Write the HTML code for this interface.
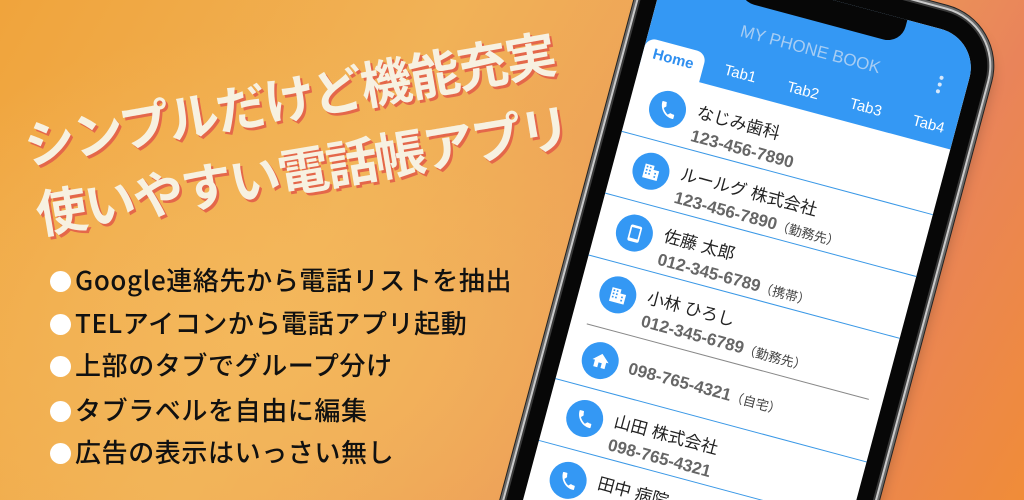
<!DOCTYPE html>
<html><head><meta charset="utf-8"><style>
*{margin:0;padding:0;box-sizing:border-box}
html{width:1024px;height:500px;overflow:hidden}
body{width:1024px;height:500px;overflow:hidden;position:relative;font-family:"Liberation Sans","Noto Sans CJK JP",sans-serif;
background:radial-gradient(ellipse 420px 300px at 260px 330px,rgba(244,184,92,0.9),rgba(244,184,92,0) 100%),linear-gradient(120deg,#f0a43c 0%,#f1b257 35%,#ec9a58 65%,#e9845a 80%,#f08c38 100%);}
#clip{position:absolute;left:0;top:0;width:1024px;height:500px;overflow:hidden}
.hl{position:absolute;color:#f7f1e1;font-weight:bold;font-size:51px;white-space:nowrap;text-shadow:2px 3px 0 #e4674a;transform-origin:0 50%;font-family:"Noto Sans CJK JP",sans-serif;letter-spacing:-2px}
.bl{position:absolute;left:50px;font-size:26px;letter-spacing:0.6px;color:#111;white-space:nowrap;font-family:"Noto Sans CJK JP",sans-serif;line-height:30px;font-weight:500}
.bl b{display:inline-block;width:21px;height:21px;border-radius:50%;background:#fff;vertical-align:-2px;margin-right:4px}
.phone{position:absolute;left:661px;top:-15px;width:0;height:0;transform:rotate(15deg);transform-origin:0 0}
.frame{position:absolute;left:-16px;top:-48px;width:354px;height:760px;border-radius:56px;background:#070707;box-shadow:0 0 0 2px #3a3a3a,0 0 0 4px #c9c9c9,0 0 0 6px #6a6a6a,0 0 0 7px #222,6px 8px 14px rgba(0,0,0,.25)}
.screen{position:absolute;left:0;top:-30px;width:322px;height:740px;border-radius:40px 40px 0 0;background:#fff;overflow:hidden}
.hdr{position:absolute;left:0;top:0;width:322px;height:114px;background:#3498f4}
.notch{position:absolute;left:77px;top:-20px;width:170px;height:45px;background:#070707;border-radius:0 0 18px 18px}
.title{position:absolute;left:0;width:322px;top:44px;text-align:center;color:#a7cdf3;font-size:17px}
.tab{position:absolute;top:87px;width:65px;text-align:center;color:#fff;font-size:15px}
.home{position:absolute;left:0;top:84px;width:62px;height:34px;background:#fff;border-radius:10px 10px 0 0;color:#2f8ff0;font-weight:bold;font-size:15px;text-align:center;line-height:30px}
.dots{position:absolute;left:293px;top:45px;width:4px}
.dots i{display:block;width:4px;height:4px;border-radius:50%;background:#d6e8fb;margin-bottom:3px}
.row{position:absolute;left:0;width:322px}
.ic{position:absolute;left:20px;width:37px;height:37px;border-radius:50%;background:#3498f4;display:flex;align-items:center;justify-content:center}
.nm{position:absolute;left:68px;font-size:17px;color:#222;white-space:nowrap;line-height:20px}
.nu{position:absolute;left:68px;font-size:17px;color:#666;font-weight:bold;white-space:nowrap;line-height:20px}
.nu small{font-size:13px;font-weight:normal;color:#444}
.sep{position:absolute;left:0;width:322px;height:1px;background:#3a98e6}
</style></head><body>
<div id="clip">
<div class="hl" style="left:24px;top:106px;transform:rotate(-10deg)">シンプルだけど機能充実</div>
<div class="hl" style="left:36px;top:175px;transform:rotate(-9.5deg)">使いやすい電話帳アプリ</div>

<div class="bl" style="top:265px"><b></b>Google連絡先から電話リストを抽出</div>
<div class="bl" style="top:308px"><b></b>TELアイコンから電話アプリ起動</div>
<div class="bl" style="top:350px"><b></b>上部のタブでグループ分け</div>
<div class="bl" style="top:395px"><b></b>タブラベルを自由に編集</div>
<div class="bl" style="top:437px"><b></b>広告の表示はいっさい無し</div>

<div class="phone">
 <div class="frame"></div>
 <div class="screen">
  <div class="hdr"></div>
  <div class="notch"></div>
  <div class="title">MY PHONE BOOK</div>
  <div class="home">Home</div>
  <div class="tab" style="left:67px">Tab1</div>
  <div class="tab" style="left:132px">Tab2</div>
  <div class="tab" style="left:197px">Tab3</div>
  <div class="tab" style="left:262px">Tab4</div>
  <div class="dots"><i></i><i></i><i></i></div>
 </div>
 <div class="row" style="top:0">
  <div class="ic" style="top:100px"><svg width="20" height="20" viewBox="0 0 24 24"><path fill="#fff" d="M6.6 10.8c1.4 2.8 3.8 5.1 6.6 6.6l2.2-2.2c.3-.3.7-.4 1-.2 1.1.4 2.3.6 3.6.6.6 0 1 .4 1 1V20c0 .6-.4 1-1 1C10.6 21 3 13.4 3 4c0-.6.4-1 1-1h3.5c.6 0 1 .4 1 1 0 1.3.2 2.5.6 3.6.1.3 0 .7-.2 1z"/></svg></div>
  <div class="nm" style="top:104px">なじみ歯科</div>
  <div class="nu" style="top:128px">123-456-7890</div>
 </div>
 <div class="sep" style="top:151px"></div>
 <div class="row">
  <div class="ic" style="top:164px"><svg width="20" height="20" viewBox="0 0 24 24"><path fill="#fff" d="M3 4h11v17H3zM14 9h7v12h-7z"/><path fill="#3498f4" d="M5 6h2v2H5zM9 6h2v2H9zM5 10h2v2H5zM9 10h2v2H9zM5 14h2v2H5zM9 14h2v2H9zM16 12h2v2h-2zM16 16h2v2h-2z"/></svg></div>
  <div class="nm" style="top:168px">ルールグ 株式会社</div>
  <div class="nu" style="top:192px">123-456-7890<small>（勤務先）</small></div>
 </div>
 <div class="sep" style="top:215px"></div>
 <div class="row">
  <div class="ic" style="top:228px"><svg width="20" height="20" viewBox="0 0 24 24"><path fill="#fff" d="M7 2h10c1 0 2 1 2 2v16c0 1-1 2-2 2H7c-1 0-2-1-2-2V4c0-1 1-2 2-2z"/><path fill="#3498f4" d="M7 5h10v13H7z"/></svg></div>
  <div class="nm" style="top:232px">佐藤 太郎</div>
  <div class="nu" style="top:256px">012-345-6789<small>（携帯）</small></div>
 </div>
 <div class="sep" style="top:279px"></div>
 <div class="row">
  <div class="ic" style="top:292px"><svg width="20" height="20" viewBox="0 0 24 24"><path fill="#fff" d="M3 4h11v17H3zM14 9h7v12h-7z"/><path fill="#3498f4" d="M5 6h2v2H5zM9 6h2v2H9zM5 10h2v2H5zM9 10h2v2H9zM5 14h2v2H5zM9 14h2v2H9zM16 12h2v2h-2zM16 16h2v2h-2z"/></svg></div>
  <div class="nm" style="top:296px">小林 ひろし</div>
  <div class="nu" style="top:320px">012-345-6789<small>（勤務先）</small></div>
 </div>
 <div class="sep" style="top:346px;left:16px;width:292px;background:#888"></div>
 <div class="row">
  <div class="ic" style="top:360px"><svg width="20" height="20" viewBox="0 0 24 24"><path fill="#fff" d="M10 20v-6h4v6h5v-8h3L12 3 2 12h3v8z"/></svg></div>
  <div class="nu" style="top:369px">098-765-4321<small>（自宅）</small></div>
 </div>
 <div class="sep" style="top:407px"></div>
 <div class="row">
  <div class="ic" style="top:420px"><svg width="20" height="20" viewBox="0 0 24 24"><path fill="#fff" d="M6.6 10.8c1.4 2.8 3.8 5.1 6.6 6.6l2.2-2.2c.3-.3.7-.4 1-.2 1.1.4 2.3.6 3.6.6.6 0 1 .4 1 1V20c0 .6-.4 1-1 1C10.6 21 3 13.4 3 4c0-.6.4-1 1-1h3.5c.6 0 1 .4 1 1 0 1.3.2 2.5.6 3.6.1.3 0 .7-.2 1z"/></svg></div>
  <div class="nm" style="top:424px">山田 株式会社</div>
  <div class="nu" style="top:448px">098-765-4321</div>
 </div>
 <div class="sep" style="top:471px"></div>
 <div class="row">
  <div class="ic" style="top:484px"><svg width="20" height="20" viewBox="0 0 24 24"><path fill="#fff" d="M6.6 10.8c1.4 2.8 3.8 5.1 6.6 6.6l2.2-2.2c.3-.3.7-.4 1-.2 1.1.4 2.3.6 3.6.6.6 0 1 .4 1 1V20c0 .6-.4 1-1 1C10.6 21 3 13.4 3 4c0-.6.4-1 1-1h3.5c.6 0 1 .4 1 1 0 1.3.2 2.5.6 3.6.1.3 0 .7-.2 1z"/></svg></div>
  <div class="nm" style="top:488px">田中 病院</div>
 </div>
</div>
</div>
</body></html>
